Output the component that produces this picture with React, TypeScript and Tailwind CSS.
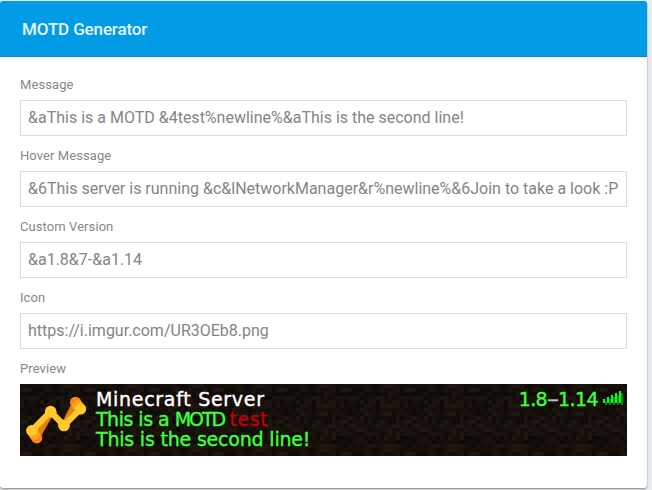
import React from 'react';

const fields = [
  { label: 'Message', value: '&aThis is a MOTD &4test%newline%&aThis is the second line!' },
  { label: 'Hover Message', value: '&6This server is running &c&lNetworkManager&r%newline%&6Join to take a look :P' },
  { label: 'Custom Version', value: '&a1.8&7-&a1.14' },
  { label: 'Icon', value: 'https://i.imgur.com/UR3OEb8.png' },
];

const shades = ['#0f0908', '#140e0b', '#18110d', '#1b140f', '#15100c', '#120c09', '#1d1611', '#17100c'];

// Dirt tile: 16 x 16 blocks, repeated across the server entry.
const dirt = Array.from({ length: 256 }, (_, i) => {
  const h = Math.sin(i * 127.1 + 31.7) * 43758.5453;
  return shades[Math.floor((h - Math.floor(h)) * shades.length)];
});

function DirtBackground() {
  return (
    <svg className="absolute inset-0 h-full w-full" shapeRendering="crispEdges" aria-hidden="true">
      <defs>
        <pattern id="dirt" width="64" height="64" patternUnits="userSpaceOnUse">
          {dirt.map((c, i) => (
            <rect key={i} x={(i % 16) * 4} y={Math.floor(i / 16) * 4} width="4" height="4" fill={c} />
          ))}
        </pattern>
      </defs>
      <rect width="100%" height="100%" fill="url(#dirt)" />
    </svg>
  );
}

function Trace({ points, line, dot }: { points: number[][]; line: string; dot: string }) {
  return (
    <g>
      <polyline points={points.map((p) => p.join(',')).join(' ')} fill="none" stroke={line} strokeWidth="6" />
      {points.map(([x, y]) => (
        <circle key={x} cx={x} cy={y} r="5.6" fill={dot} />
      ))}
    </g>
  );
}

function ServerIcon() {
  return (
    <svg className="block h-16 w-16" viewBox="0 0 64 64" aria-hidden="true">
      <Trace points={[[12.7, 49.8], [27, 24.5], [40, 37], [51.5, 14.3]]} line="#e5780f" dot="#f9860f" />
      <Trace points={[[10.2, 46.2], [26.8, 24], [40, 37.4], [54, 17.6]]} line="#dc8a16" dot="#fca420" />
      <Trace points={[[7.7, 42.6], [26.6, 23.3], [40, 37.7], [56.6, 21]]} line="#ffc62b" dot="#ffc82d" />
    </svg>
  );
}

function SignalIcon() {
  return (
    <svg className="block h-[14px] w-5" viewBox="0 0 20 14" shapeRendering="crispEdges" aria-hidden="true">
      {[0, 1, 2, 3, 4].map((i) => (
        <g key={i}>
          <rect x={i * 4 + 2} y={10 - i * 2} width="2" height={4 + i * 2} fill="#00861a" />
          <rect x={i * 4} y={8 - i * 2} width="2" height={4 + i * 2} fill="#00ff21" />
        </g>
      ))}
    </svg>
  );
}

export default function App() {
  return (
    <div className="h-[490px] w-[652px] overflow-hidden bg-[#e9ecf0] pt-px font-['Roboto',sans-serif]">
      <main className="h-[487px] w-[647px] overflow-hidden rounded-[3px] bg-white shadow-[0_1px_2px_rgba(0,0,0,0.45)]">
        <header className="flex h-14 items-center border-b border-[#0b84c4] bg-[#039be5] pl-[22px]">
          <h1 className="text-[17px] font-medium leading-6 tracking-[-0.14px] text-[#e6f5fc]">MOTD Generator</h1>
        </header>
        <div className="flex flex-col px-5 pt-[19px]">
          {fields.map((f) => (
            <label key={f.label} className="block h-[71px]">
              <span className="block h-6 text-[13px] leading-[18px] tracking-[0.08px] text-[#888888]">{f.label}</span>
              <input
                readOnly
                value={f.value}
                className="block h-9 w-[607px] border border-[#dcdcdc] bg-white px-[7px] pb-px text-base text-[#858585] outline-none"
              />
            </label>
          ))}
          <p className="h-6 text-[13px] leading-[18px] tracking-[0.08px] text-[#888888]">Preview</p>
          <section className="relative h-[72px] w-[607px] overflow-hidden bg-[#15100c]">
            <DirtBackground />
            <div className="relative flex h-full pl-1 pt-1">
              <ServerIcon />
              <div className="ml-2 flex-1 whitespace-pre pt-px font-['DejaVu_Sans',sans-serif] text-[19px] leading-5 [-webkit-text-stroke:0.4px_currentColor]">
                <p className="tracking-[0.7px] text-white">Minecraft Server</p>
                <p className="tracking-[-0.5px] text-[#3fff3f]">This is a <span className="tracking-[-2.1px]">MOTD</span> <span className="tracking-[0.5px] text-[#be0000]">test</span></p>
                <p className="tracking-[-0.2px] text-[#3fff3f]">This is the second line!</p>
              </div>
              <div className="flex h-5 items-start pr-1">
                <span className="mr-[5px] flex pt-px font-['DejaVu_Sans',sans-serif] text-[19px] leading-5 tracking-[-0.6px] text-[#3fff3f] [-webkit-text-stroke:0.4px_currentColor]">
                  <span>1.8</span>
                  <span className="w-[11px] scale-x-[1.9] text-center text-[#bebebe]">-</span>
                  <span>1.14</span>
                </span>
                <span className="pt-[3px]"><SignalIcon /></span>
              </div>
            </div>
          </section>
        </div>
      </main>
    </div>
  );
}
